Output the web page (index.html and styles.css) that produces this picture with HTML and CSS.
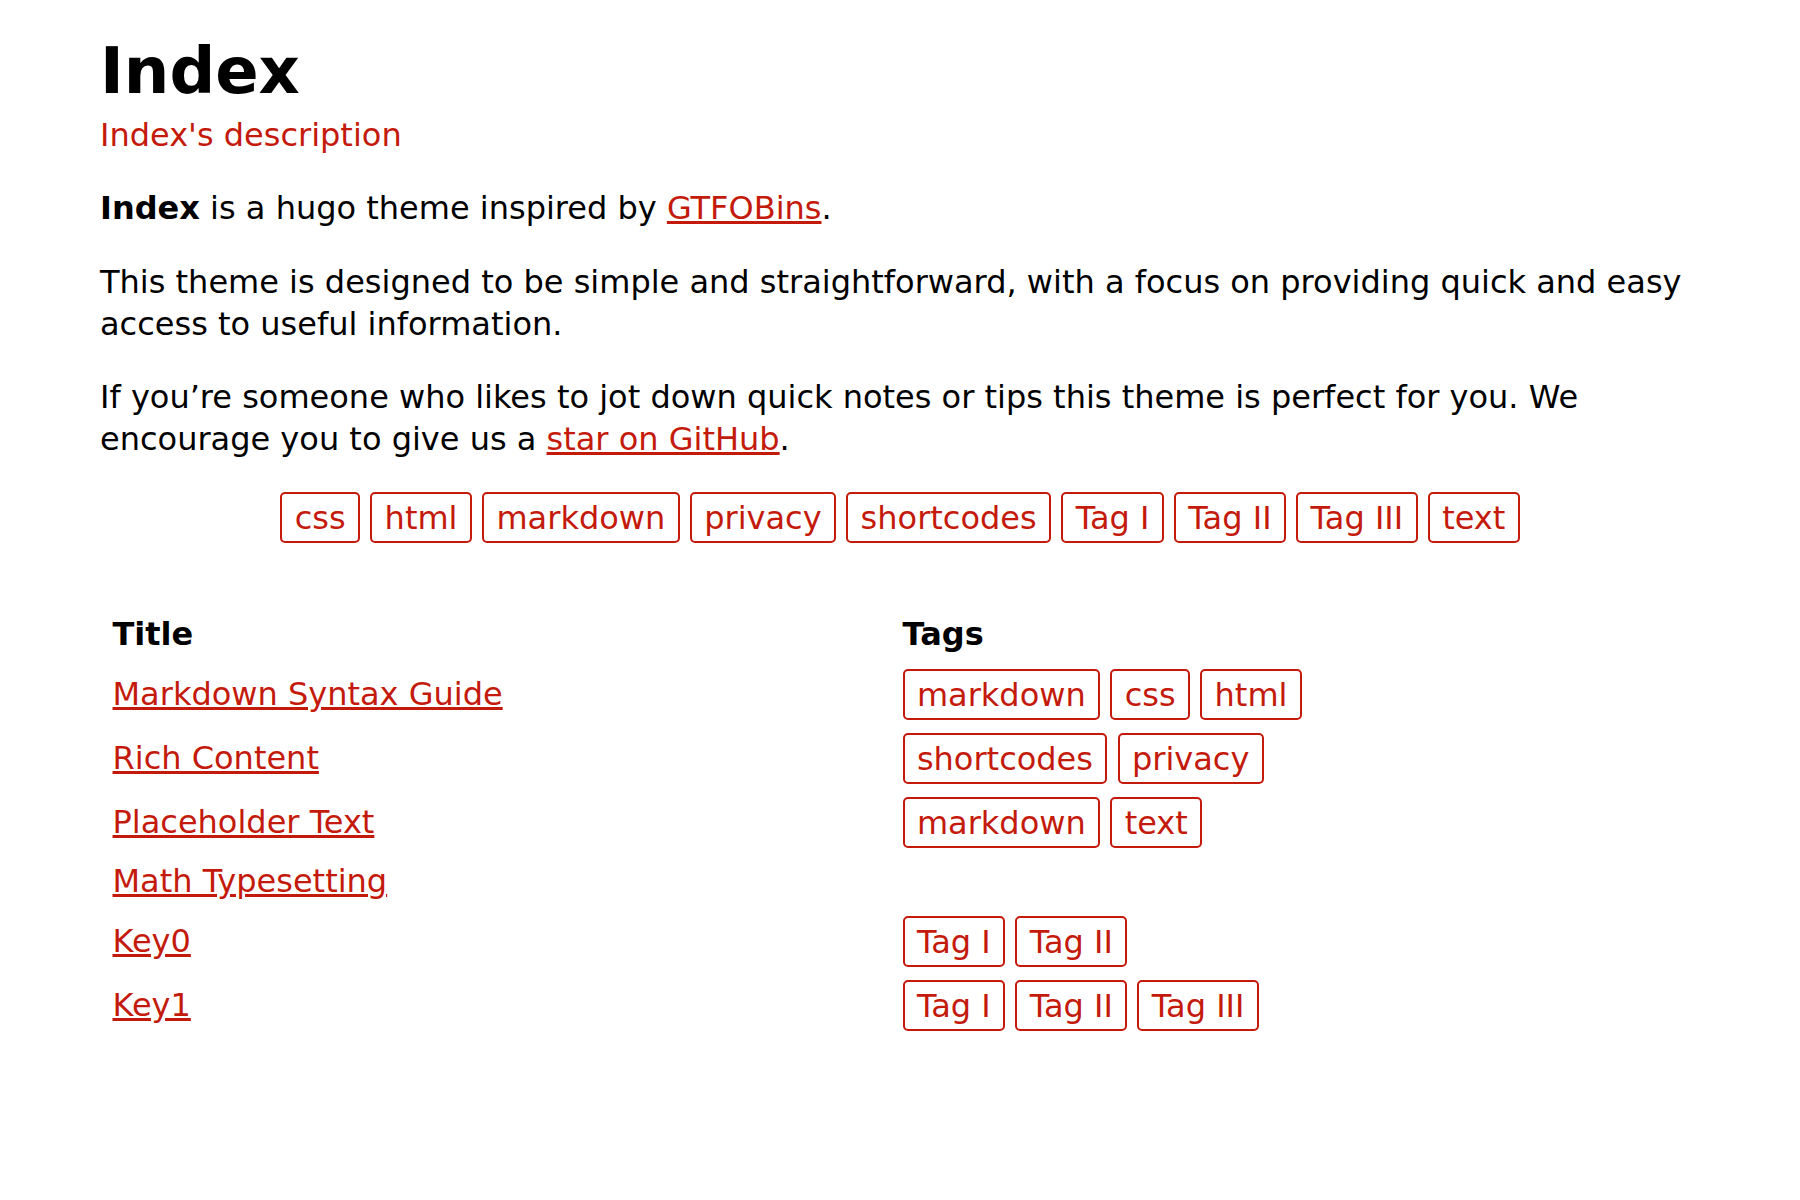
FILE: index.html
```html
<!DOCTYPE html>
<html lang="en">
<head>
<meta charset="utf-8">
<title>Index</title>
<link rel="stylesheet" href="styles.css">
</head>
<body>
<main class="page">
  <header class="page-header">
    <h1 class="page-title">Index</h1>
    <div class="page-desc">Index's description</div>
  </header>
  <section class="intro">
    <p><strong>Index</strong> is a hugo theme inspired by <a class="link" href="#">GTFOBins</a>.</p>
    <p>This theme is designed to be simple and straightforward, with a focus on providing quick and easy access to useful information.</p>
    <p>If you’re someone who likes to jot down quick notes or tips this theme is perfect for you. We encourage you to give us a <a class="link" href="#">star on GitHub</a>.</p>
  </section>
  <nav class="taglist">
    <a class="tag" href="#">css</a> <a class="tag" href="#">html</a> <a class="tag" href="#">markdown</a> <a class="tag" href="#">privacy</a> <a class="tag" href="#">shortcodes</a> <a class="tag" href="#">Tag I</a> <a class="tag" href="#">Tag II</a> <a class="tag" href="#">Tag III</a> <a class="tag" href="#">text</a>
  </nav>
  <table class="posts">
    <thead>
      <tr><th class="col-title">Title</th><th>Tags</th></tr>
    </thead>
    <tbody>
      <tr><td><a class="link" href="#">Markdown Syntax Guide</a></td><td><a class="tag" href="#">markdown</a> <a class="tag" href="#">css</a> <a class="tag" href="#">html</a></td></tr>
      <tr><td><a class="link" href="#">Rich Content</a></td><td><a class="tag" href="#">shortcodes</a> <a class="tag" href="#">privacy</a></td></tr>
      <tr><td><a class="link" href="#">Placeholder Text</a></td><td><a class="tag" href="#">markdown</a> <a class="tag" href="#">text</a></td></tr>
      <tr><td><a class="link" href="#">Math Typesetting</a></td><td></td></tr>
      <tr><td><a class="link" href="#">Key0</a></td><td><a class="tag" href="#">Tag I</a> <a class="tag" href="#">Tag II</a></td></tr>
      <tr><td><a class="link" href="#">Key1</a></td><td><a class="tag" href="#">Tag I</a> <a class="tag" href="#">Tag II</a> <a class="tag" href="#">Tag III</a></td></tr>
    </tbody>
  </table>
</main>
</body>
</html>
```

FILE: styles.css
```css
html, body {
  margin: 0;
  padding: 0;
  background: #ffffff;
}

body {
  font-family: "DejaVu Sans", sans-serif;
  font-size: 32px;
  line-height: 1.3;
  color: #000000;
}

.page {
  max-width: 1600px;
  margin: 0 auto;
  padding: 33px 0 40px;
}

.page-title {
  font-size: 64px;
  line-height: 1.2;
  font-weight: bold;
  margin: 0;
}

.page-desc {
  color: #c41a0b;
  margin-top: 5px;
}

.intro p {
  margin: 32px 0 0;
}

.link {
  color: #c41a0b;
  text-decoration: underline;
}

.taglist {
  text-align: center;
  margin-top: 32px;
}

.tag {
  display: inline-block;
  color: #c41a0b;
  text-decoration: none;
  border: 2px solid #c41a0b;
  border-radius: 5px;
  padding: 2.5px 12.4px;
  line-height: 42px;
}

.posts {
  width: 100%;
  border-collapse: collapse;
  margin-top: 64px;
}

.posts th {
  text-align: left;
  font-weight: bold;
  padding: 7px 12.5px;
}

.posts .col-title {
  width: 765px;
}

.posts td {
  padding: 6.5px 12.5px;
  vertical-align: middle;
}
```
